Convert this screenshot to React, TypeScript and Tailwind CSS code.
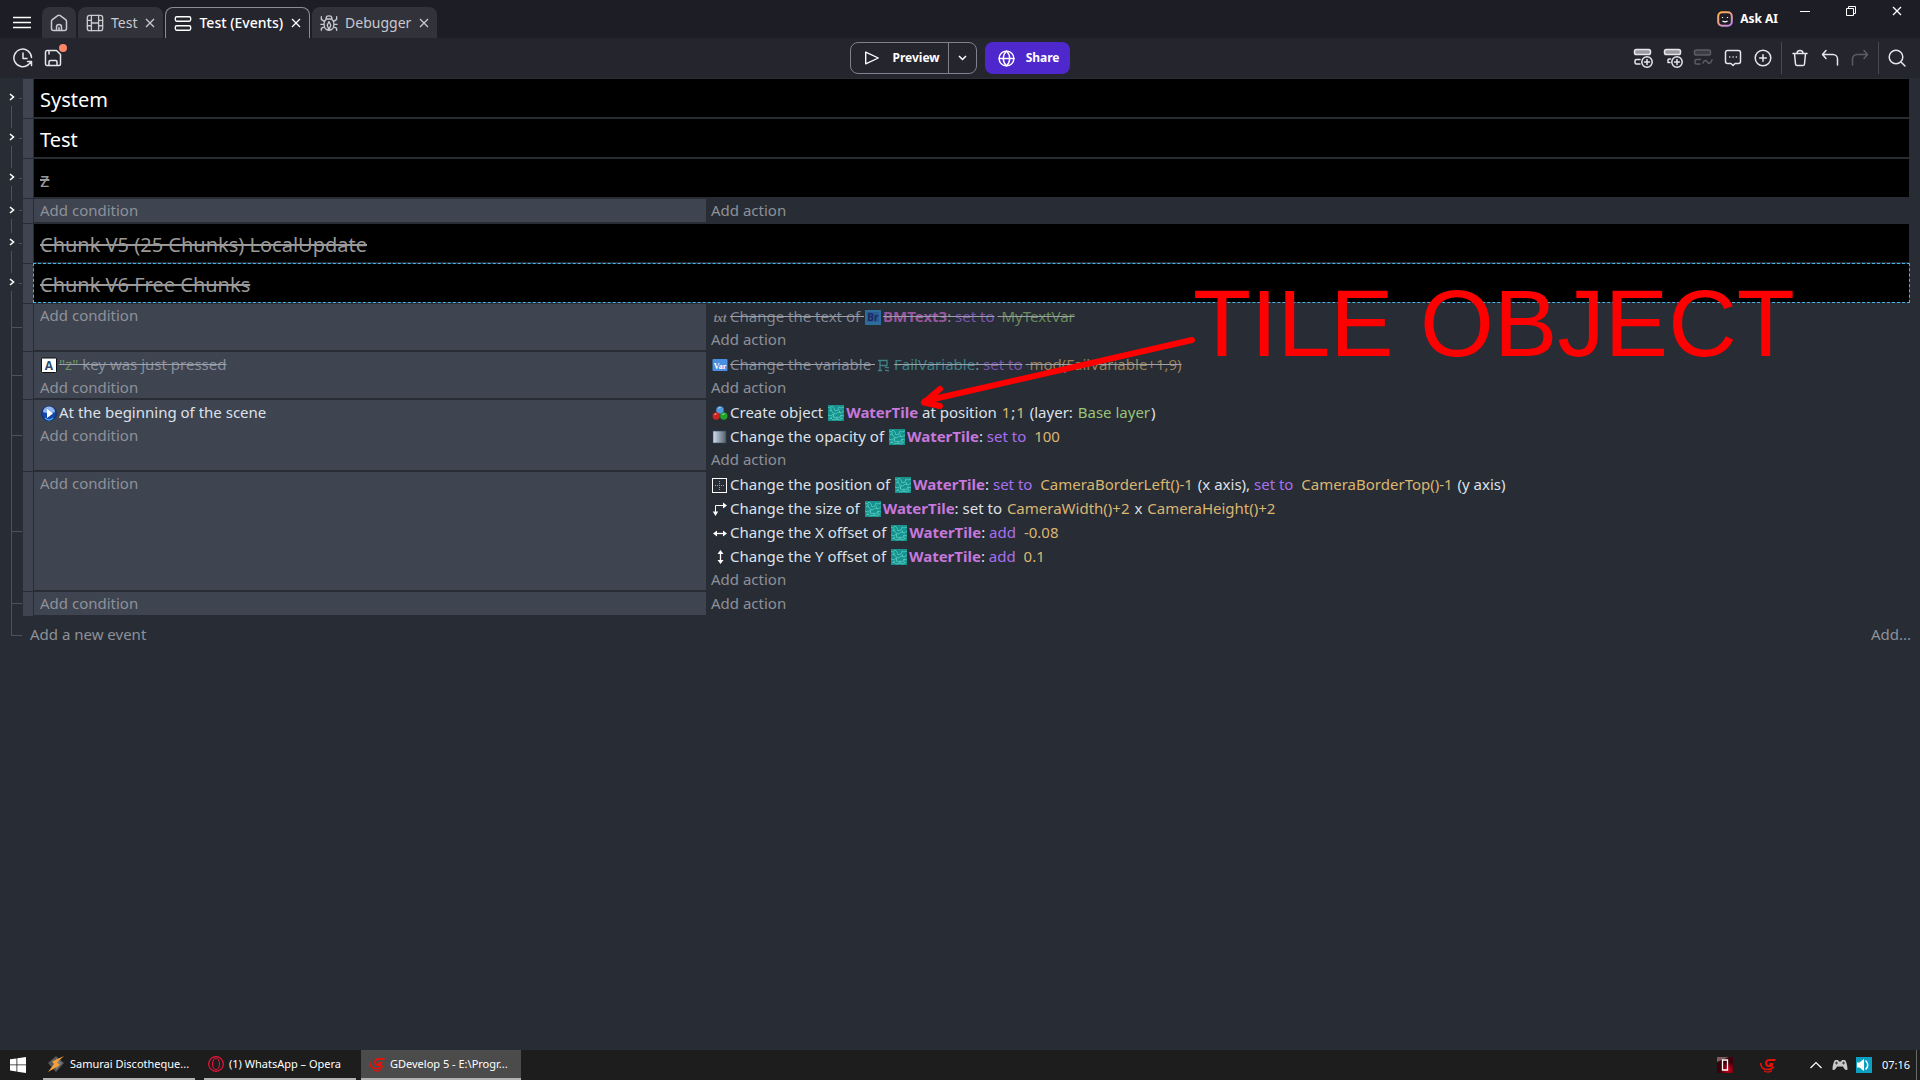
import type { ReactNode } from "react";
import clsx from "clsx";

type IconProps = { className?: string };

function LineIcon({ className, size = 20, children }: IconProps & { size?: number; children: ReactNode }) {
  return (
    <svg
      width={size}
      height={size}
      viewBox="0 0 20 20"
      fill="none"
      stroke="currentColor"
      strokeWidth="1.5"
      strokeLinecap="round"
      strokeLinejoin="round"
      aria-hidden="true"
      className={clsx("shrink-0", className)}
    >
      {children}
    </svg>
  );
}

const CloseGlyph = () => (
  <svg width="10" height="10" viewBox="0 0 10 10" stroke="currentColor" strokeWidth="1.3" aria-hidden="true">
    <path d="M1 1l8 8M9 1L1 9" />
  </svg>
);

/* ---------- title bar ---------- */

function Tab({ icon, label, active }: { icon: ReactNode; label: string; active?: boolean }) {
  return (
    <div
      className={clsx(
        "flex h-[31px] items-center rounded-t-lg pl-2 text-sm",
        active ? "border border-b-0 border-[#8c8c92] bg-[#25252e] font-medium text-white" : "bg-[#32323b] text-[#c9c9ce]",
      )}
    >
      <a href="#tab" className="flex items-center gap-[7px]">
        {icon}
        {label}
      </a>
      <button type="button" aria-label={`Close ${label}`} className="flex h-6 w-[26px] items-center justify-center">
        <CloseGlyph />
      </button>
    </div>
  );
}

function TitleBar() {
  return (
    <header className="flex h-[38px] items-end bg-[#1d1d26] text-white">
      <button type="button" aria-label="Main menu" className="flex h-[31px] w-[42px] items-center justify-center pl-[2px]">
        <svg width="18" height="14" viewBox="0 0 18 14" stroke="#fff" strokeWidth="1.6" aria-hidden="true">
          <path d="M0 1.500h18M0 6.500h18M0 11.500h18" />
        </svg>
      </button>
      <nav className="flex gap-[2px]">
        <a href="#home" aria-label="Home" className="flex h-[31px] w-[34px] items-center justify-center rounded-t-lg bg-[#32323b] text-[#c9c9ce]">
          <LineIcon>
            <path d="M2.5 8.6c0-.8.3-1.4.9-1.9l5.3-4c.8-.6 1.8-.6 2.6 0l5.3 4c.6.5.9 1.1.9 1.9v6.9c0 1.1-.9 2-2 2h-11c-1.100 0-2-.9-2-2zM7.500 17.500v-3.500a2.500 2.500 0 015 0v3.500M10 14.500v2.500" />
          </LineIcon>
        </a>
        <Tab
          label="Test"
          icon={
            <LineIcon size={18}>
              <rect x="1.500" y="1.500" width="17" height="17" rx="2.500" />
              <path d="M6 1.500v17M14 1.500v17M1.500 7h4.500M1.500 13h4.500M14 7h4.500M14 13h4.500M6 10h8" />
            </LineIcon>
          }
        />
        <Tab
          active
          label="Test (Events)"
          icon={
            <LineIcon size={18}>
              <rect x="1.500" y="3" width="17" height="5" rx="1.500" />
              <rect x="1.500" y="13" width="17" height="5" rx="1.500" />
            </LineIcon>
          }
        />
        <Tab
          label="Debugger"
          icon={
            <LineIcon size={18}>
              <path d="M7 5.500c-1.700 1.500-2.500 3.500-2.500 6 0 3.700 2.200 6.500 5.500 6.500s5.500-2.800 5.500-6.500c0-2.500-.8-4.500-2.500-6M6.500 5.500h7M7 5.500V4c0-1.200 1.200-2 3-2s3 .8 3 2v1.500M10 8.500l-2 4 2 5 2-5zM1.500 3v3l3.500 2.500M18.500 3v3L15 8.500M1 11.500h3.500M15.500 11.500H19M1.500 18v-2l3.500-2M18.500 18v-2L15 14" />
            </LineIcon>
          }
        />
      </nav>
      <div className="flex-1" />
      <button type="button" className="flex h-[38px] items-center gap-[7px] pr-1 text-xs font-bold">
        <svg width="16" height="16" viewBox="0 0 16 16" fill="none" aria-hidden="true">
          <defs>
            <linearGradient id="ask" x1="0" y1="0" x2="0.700" y2="1">
              <stop offset="0" stopColor="#ffb13d" />
              <stop offset="0.500" stopColor="#f0a08a" />
              <stop offset="1" stopColor="#c48be6" />
            </linearGradient>
          </defs>
          <rect x="1.200" y="1.200" width="13.600" height="13.600" rx="4" stroke="url(#ask)" strokeWidth="2" />
          <path d="M5.500 6v1M10.500 6v1M5.500 10c1.500 1.100 3.500 1.100 5 0" stroke="#fff" strokeWidth="1.200" />
        </svg>
        Ask AI
      </button>
      <div className="flex self-start">
        <button type="button" aria-label="Minimize" className="flex h-[22px] w-[46px] items-center justify-center">
          <svg width="10" height="10" viewBox="0 0 10 10" stroke="#fff" aria-hidden="true">
            <path d="M0 5.500h10" />
          </svg>
        </button>
        <button type="button" aria-label="Restore" className="flex h-[22px] w-[46px] items-center justify-center">
          <svg width="10" height="10" viewBox="0 0 10 10" fill="none" stroke="#fff" aria-hidden="true">
            <path d="M.5 2.500h7v7h-7zM2.500 2.500v-2h7v7h-2" />
          </svg>
        </button>
        <button type="button" aria-label="Close" className="flex h-[22px] w-[46px] items-center justify-center">
          <CloseGlyph />
        </button>
      </div>
    </header>
  );
}

/* ---------- toolbar ---------- */

function ToolButton({ label, dim, children }: { label: string; dim?: boolean; children: ReactNode }) {
  return (
    <button
      type="button"
      aria-label={label}
      disabled={dim}
      className={clsx("flex h-8 w-[30px] items-center justify-center", dim ? "text-[#5c5c64]" : "text-[#e6e6ea]")}
    >
      <LineIcon>{children}</LineIcon>
    </button>
  );
}

const ToolSeparator = () => <span className="mx-[3px] h-8 w-px bg-[#494952]" />;

function Toolbar() {
  return (
    <div className="grid h-10 grid-cols-[1fr_auto_1fr] items-center bg-[#25252e] px-2">
      <div className="flex items-center">
        <ToolButton label="Version history">
          <path d="M18.500 9.500a8.800 8.800 0 10-3.200 7.200M10 5v5.500h4M14.500 13.500h4v4M18.500 13.500L14.500 17.500" />
        </ToolButton>
        <div className="relative">
          <ToolButton label="Save">
            <path d="M2.500 4c0-.8.7-1.500 1.500-1.500h9.500l4 4V16c0 .8-.7 1.500-1.500 1.500H4c-.8 0-1.500-.7-1.500-1.500zM6 2.500V6M6 17.500v-3.800c0-.7.500-1.200 1.200-1.200h5.600c.7 0 1.200.5 1.200 1.200v3.800" />
          </ToolButton>
          <span className="absolute right-px top-[2px] h-2 w-2 rounded-full bg-[#ff8569]" />
        </div>
      </div>

      <div className="flex h-8 gap-2 text-xs font-bold text-white">
        <div className="flex rounded-lg border border-[#80808f]">
          <button type="button" className="flex items-center gap-[11px] pl-3 pr-2">
            <LineIcon size={18}>
              <path d="M3 3.500v13L17 10z" />
            </LineIcon>
            Preview
          </button>
          <button type="button" aria-label="Preview options" className="flex w-7 items-center justify-center border-l border-[#80808f]">
            <svg width="9" height="6" viewBox="0 0 9 6" fill="none" stroke="#fff" strokeWidth="1.500" aria-hidden="true">
              <path d="M1 1l3.500 3.500L8 1" />
            </svg>
          </button>
        </div>
        <button type="button" className="flex items-center gap-[10px] rounded-lg bg-[#4f28cd] pl-3 pr-[10px]">
          <LineIcon size={19}>
            <circle cx="10" cy="10" r="7.800" />
            <path d="M2.200 10h15.600M10 2.200c-4.500 4.500-4.500 11 0 15.600M10 2.200c4.500 4.500 4.500 11 0 15.600" />
          </LineIcon>
          Share
        </button>
      </div>

      <div className="flex items-center justify-end">
        <ToolButton label="Add event">
          <rect x="1.500" y="1.500" width="16" height="5" rx="1.800" fill="#9a9aa0" />
          <path d="M7 11.500H3.500A1.500 1.500 0 002 13v1.500A1.500 1.500 0 003.500 16H7" />
          <circle cx="14" cy="14" r="5.200" />
          <path d="M14 11.500v5M11.500 14h5" />
        </ToolButton>
        <ToolButton label="Add sub-event">
          <rect x="1.500" y="1.500" width="16" height="5" rx="1.800" fill="#9a9aa0" />
          <path d="M7.500 11H6a1 1 0 00-1 1v2.500h2" />
          <circle cx="14" cy="14" r="5.200" />
          <path d="M14 11.500v5M11.500 14h5" />
        </ToolButton>
        <ToolButton label="Add event from template" dim>
          <rect x="1.500" y="2" width="16" height="5" rx="1.800" fill="#3c3c45" />
          <path d="M7.500 11.500h-4A1.500 1.500 0 002 13v1.500A1.500 1.500 0 003.500 16h3.500M10 15c1.500-4 3.500-2.500 4.500-.8s3 2 4.500-2.200" />
        </ToolButton>
        <ToolButton label="Add comment">
          <path d="M4.500 2.500h11a2 2 0 012 2v9a2 2 0 01-2 2H12l-2 2-2-2H4.500a2 2 0 01-2-2v-9a2 2 0 012-2zM6.700 9h.1M10 9h.1M13.300 9h.1" />
        </ToolButton>
        <ToolButton label="Add other event">
          <circle cx="10" cy="10" r="7.800" />
          <path d="M10 6.700v6.600M6.700 10h6.600" />
        </ToolButton>
        <ToolSeparator />
        <ToolButton label="Delete">
          <path d="M3 5.500h14M7 5.500c0-2 1.200-3 3-3s3 1 3 3M4.500 5.500L5.500 16c.1.900.7 1.500 1.600 1.500h5.800c.9 0 1.500-.6 1.600-1.500l1-10.500" />
        </ToolButton>
        <ToolButton label="Undo">
          <path d="M6 2.500L2.500 6.500 6 10.500M2.500 6.500H13a4.500 4.500 0 014.500 4.500v6" />
        </ToolButton>
        <ToolButton label="Redo" dim>
          <path d="M14 2.500l3.500 4-3.500 4M17.500 6.500H7A4.500 4.500 0 002.500 11v6" />
        </ToolButton>
        <ToolSeparator />
        <ToolButton label="Search">
          <circle cx="9" cy="9" r="6.800" />
          <path d="M14 14l4 4" />
        </ToolButton>
      </div>
    </div>
  );
}

/* ---------- events sheet ---------- */

function TinyIcon({ children }: { children: ReactNode }) {
  return (
    <svg width="16" height="16" viewBox="0 0 16 16" fill="none" aria-hidden="true" className="ml-px mr-[2px] inline-block align-[-3px]">
      {children}
    </svg>
  );
}

const KeyIcon = () => (
  <TinyIcon>
    <rect x="0.500" y="1" width="15" height="14.500" rx="1" fill="#fff" stroke="#0d0f14" />
    <text x="8" y="13" textAnchor="middle" fontSize="12" fontWeight="700" fontFamily="Open Sans, sans-serif" fill="#2f4a6b">A</text>
  </TinyIcon>
);

const SceneStartIcon = () => (
  <TinyIcon>
    <circle cx="8" cy="8.500" r="7.300" fill="#1646a8" stroke="#0b2a72" />
    <path d="M2 7c0-3.500 3-5.500 6-5.500S14 3.500 14 7c-3 1.500-9 1.500-12 0z" fill="#8fb4ee" />
    <path d="M4 13c2 2.500 6 2.500 8 0" stroke="#3fa2f5" strokeWidth="1.500" />
    <path d="M6 4l6 4.500L6 13z" fill="#fff" />
  </TinyIcon>
);

const TextIcon = () => (
  <TinyIcon>
    <text x="8" y="13" textAnchor="middle" fontSize="12" fontStyle="italic" fontWeight="700" fontFamily="Liberation Serif, serif" fill="#85888f">txt</text>
  </TinyIcon>
);

const BitmapTextIcon = () => (
  <TinyIcon>
    <rect x="0" y="1" width="16" height="15" fill="#2d6d9c" />
    <rect x="2" y="3" width="12" height="10" fill="#2a5c94" />
    <text x="8" y="12" textAnchor="middle" fontSize="10" fontWeight="700" fontFamily="Open Sans, sans-serif" fill="#20275f">Br</text>
  </TinyIcon>
);

const VarIcon = () => (
  <TinyIcon>
    <rect x="0.500" y="2" width="15" height="12" rx="1" fill="#4a90e2" />
    <text x="8" y="12" textAnchor="middle" fontSize="8" fontWeight="700" fontFamily="Liberation Serif, serif" fill="#fff">Var</text>
  </TinyIcon>
);

const SceneVariableIcon = () => (
  <TinyIcon>
    <path d="M4 3v11M2 13.500h4M2 3.500h9v5H4M9 10.500c1.500-1 2.500 1 4 0M9 13.500c1.500-1 2.500 1 4 0M11 5v3" stroke="#3f8089" strokeWidth="1.300" />
  </TinyIcon>
);

const CreateIcon = () => (
  <TinyIcon>
    <circle cx="8" cy="5" r="3.800" fill="#4f9be0" />
    <circle cx="4.200" cy="11" r="3.700" fill="#c9261f" />
    <circle cx="11.800" cy="11" r="3.700" fill="#22a32b" />
    <path d="M6.500 3.500a2 2 0 012-1M2.500 10a2 2 0 012-1.200M10.500 10a2 2 0 012-1.200" stroke="#fff" opacity="0.700" />
  </TinyIcon>
);

const OpacityIcon = () => (
  <TinyIcon>
    <defs>
      <linearGradient id="fade">
        <stop offset="0" stopColor="#cfdfee" />
        <stop offset="1" stopColor="#55616e" />
      </linearGradient>
    </defs>
    <rect x="1" y="2" width="13" height="12" fill="url(#fade)" stroke="#33475a" strokeWidth="0.600" />
  </TinyIcon>
);

const PositionIcon = () => (
  <TinyIcon>
    <rect x="0.500" y="1.500" width="14" height="14" stroke="#fff" />
    <path d="M7.500 4v9M3 8.500h9" stroke="#9aa0ab" strokeDasharray="1 1" />
  </TinyIcon>
);

const SizeIcon = () => (
  <TinyIcon>
    <path d="M3.500 11V4.500H11" stroke="#fff" />
    <path d="M11 1.500l4 3-4 3zM.8 10.500h5.400L3.500 15z" fill="#fff" />
  </TinyIcon>
);

const OffsetXIcon = () => (
  <TinyIcon>
    <path d="M4 8.500h8" stroke="#fff" strokeWidth="1.300" />
    <path d="M5 5.500v6l-4-3zM11 5.500v6l4-3z" fill="#fff" />
  </TinyIcon>
);

const OffsetYIcon = () => (
  <TinyIcon>
    <path d="M8.500 4v8" stroke="#fff" strokeWidth="1.300" />
    <path d="M5.500 5h6l-3-4zM5.500 11h6l-3 4z" fill="#fff" />
  </TinyIcon>
);

const WaterTile = () => (
  <>
    <TinyIcon>
      <rect width="16" height="16" fill="#17938f" />
      <path
        d="M0 2l2 1 2-2 2 2 1 3 3-1 1-3 2 1 3-1M1 6l2-1 2 3 3 1 2-2 3 1 3-2M0 10l3 1 2-2 1 4 3-1 2 1 2-3 3 1M1 14l2-1 2 2 4-1 3 1 3-2M3 3v3M11 5l1 3M6 9l-1 3M9 12v3M13 10v4M4 12l-2 2"
        stroke="#5fd3c6"
        strokeWidth="0.700"
      />
    </TinyIcon>
    <b className="font-bold text-[#c678dd]">WaterTile</b>
  </>
);

const Op = ({ children }: { children: ReactNode }) => <span className="mr-[3px] text-[#a86ff0]">{children}</span>;
const Num = ({ children }: { children: ReactNode }) => <span className="mx-px text-[#dbb671]">{children}</span>;
const Str = ({ children }: { children: ReactNode }) => <span className="mx-px text-[#98c379]">{children}</span>;

function Instruction({ icon, disabled, children }: { icon: ReactNode; disabled?: boolean; children: ReactNode }) {
  return (
    <p className={clsx("h-6 whitespace-nowrap leading-6", disabled ? "text-[#abb2bf]/70 line-through decoration-[#9ea2aa]" : "text-[#dde1ea]")}>
      {icon}
      {children}
    </p>
  );
}

const AddLink = ({ children }: { children: ReactNode }) => (
  <button type="button" className="block h-[22px] leading-[22px] text-[#8d9199]">
    {children}
  </button>
);

function Rail({ foldable, first }: { foldable?: boolean; first?: boolean }) {
  if (!foldable) {
    return (
      <div className="flex w-[23px] items-stretch pl-[11px]">
        <span className="w-px bg-[#4e525a]" />
        <span className="mb-[2px] h-px w-[10px] self-center bg-[#4e525a]" />
      </div>
    );
  }
  return (
    <div className="flex w-[23px] items-center">
      <div className="flex w-[19px] flex-col items-center self-stretch pl-1">
        <span className={clsx("w-px flex-1", !first && "bg-[#4e525a]")} />
        <button type="button" aria-label="Expand" className="flex h-[18px] items-center">
          <svg width="6" height="8" viewBox="0 0 6 8" fill="none" stroke="#fff" strokeWidth="1.600" aria-hidden="true">
            <path d="M1 1l3.500 3L1 7" />
          </svg>
        </button>
        <span className="w-px flex-1 bg-[#4e525a]" />
        <span className="h-1 w-px bg-[#4e525a]" />
      </div>
      <span className="mb-[2px] h-px w-[3px] bg-[#4e525a]" />
    </div>
  );
}

function EventRow({ foldable, first, children }: { foldable?: boolean; first?: boolean; children: ReactNode }) {
  return (
    <li className="flex">
      <Rail foldable={foldable} first={first} />
      <span className="mb-px mr-px w-[10px] bg-[#3f4451]" />
      <div className="mb-[2px] flex min-w-0 flex-1">{children}</div>
    </li>
  );
}

function Group({ title, disabled, selected, first }: { title: string; disabled?: boolean; selected?: boolean; first?: boolean }) {
  return (
    <EventRow foldable first={first}>
      <h2
        className={clsx(
          "relative h-[38px] flex-1 bg-black pl-[6px] text-xl leading-[42px]",
          disabled ? "text-[#999] line-through" : "text-white",
        )}
      >
        {title}
        {selected && <span className="absolute -inset-px border border-dashed border-[#49b3e6]" />}
      </h2>
    </EventRow>
  );
}

function StandardEvent({ foldable, conditions, actions }: { foldable?: boolean; conditions?: ReactNode; actions?: ReactNode }) {
  return (
    <EventRow foldable={foldable}>
      <div className="min-h-[23px] w-[672px] shrink-0 bg-[#3f4451] pl-[6px]">
        {conditions}
        <AddLink>Add condition</AddLink>
      </div>
      <div className="min-w-0 flex-1 pl-[5px]">
        {actions}
        <AddLink>Add action</AddLink>
      </div>
    </EventRow>
  );
}

function EventsSheet() {
  return (
    <main className="flex-1 bg-[#282c34] pr-[11px] pt-px font-['Noto_Sans',sans-serif] text-[15px]">
      <ul>
        <Group first title="System" />
        <Group title="Test" />
        <Group disabled title="z" />
        <StandardEvent foldable />
        <Group disabled title="Chunk V5 (25 Chunks) LocalUpdate" />
        <Group disabled selected title="Chunk V6 Free Chunks" />
        <StandardEvent
          actions={
            <Instruction disabled icon={<TextIcon />}>
              Change the text of <BitmapTextIcon />
              <b className="text-[#96579f]">BMText3</b>: <span className="mr-[3px] text-[#7b53ab]">set to</span>{" "}
              <span className="text-[#6a8a5b]">MyTextVar</span>
            </Instruction>
          }
        />
        <StandardEvent
          conditions={
            <Instruction disabled icon={<KeyIcon />}>
              <span className="text-[#6f9160]">"z"</span> key was just pressed
            </Instruction>
          }
          actions={
            <Instruction disabled icon={<VarIcon />}>
              Change the variable <SceneVariableIcon />
              <span className="text-[#3f8089]">FailVariable</span>: <span className="mr-[3px] text-[#7b53ab]">set to</span>{" "}
              <span className="text-[#9a8258]">mod(FailVariable+1,9)</span>
            </Instruction>
          }
        />
        <StandardEvent
          conditions={<Instruction icon={<SceneStartIcon />}>At the beginning of the scene</Instruction>}
          actions={
            <>
              <Instruction icon={<CreateIcon />}>
                Create object <WaterTile /> at position <Num>1</Num>;<Num>1</Num> (layer: <Str>Base layer</Str>)
              </Instruction>
              <Instruction icon={<OpacityIcon />}>
                Change the opacity of <WaterTile />: <Op>set to</Op> <Num>100</Num>
              </Instruction>
            </>
          }
        />
        <StandardEvent
          actions={
            <>
              <Instruction icon={<PositionIcon />}>
                Change the position of <WaterTile />: <Op>set to</Op> <Num>CameraBorderLeft()-1</Num> (x axis), <Op>set to</Op>{" "}
                <Num>CameraBorderTop()-1</Num> (y axis)
              </Instruction>
              <Instruction icon={<SizeIcon />}>
                Change the size of <WaterTile />: set to <Num>CameraWidth()+2</Num> x <Num>CameraHeight()+2</Num>
              </Instruction>
              <Instruction icon={<OffsetXIcon />}>
                Change the X offset of <WaterTile />: <Op>add</Op> <Num>-0.08</Num>
              </Instruction>
              <Instruction icon={<OffsetYIcon />}>
                Change the Y offset of <WaterTile />: <Op>add</Op> <Num>0.1</Num>
              </Instruction>
            </>
          }
        />
        <StandardEvent />
      </ul>
      <div className="flex text-[#8d9199]">
        <span className="ml-[11px] h-[19px] w-[11px] border-b border-l border-[#4e525a]" />
        <div className="flex flex-1 justify-between pl-2 pt-[6px]">
          <button type="button">Add a new event</button>
          <button type="button" className="-mr-[2px]">Add...</button>
        </div>
      </div>
    </main>
  );
}

/* Red call-out drawn on top of the sheet. */
function Annotation() {
  return (
    <svg
      width="900"
      height="170"
      viewBox="0 0 900 170"
      className="pointer-events-none absolute left-[915px] top-[255px]"
      role="img"
      aria-label="TILE OBJECT"
    >
      <path d="M277 85L10 146M25 134L9 147.500l16 3.500" fill="none" stroke="#f00" strokeWidth="6" strokeLinecap="round" strokeLinejoin="round" />
      <text x="278" y="101" fontSize="95" fontFamily="Liberation Sans, Arial, sans-serif" fill="#f00">TILE OBJECT</text>
    </svg>
  );
}

/* ---------- desktop task bar ---------- */

function TaskButton({ icon, label, active }: { icon: ReactNode; label: string; active?: boolean }) {
  return (
    <button
      type="button"
      className={clsx(
        "flex h-[30px] items-center gap-[5px] whitespace-nowrap border-b-2 border-[#b3b3b3] text-left",
        active ? "w-[160px] bg-[#4b4b4b] pl-2" : "w-[152px] pl-1",
      )}
    >
      {icon}
      <span>{label}</span>
    </button>
  );
}

const GDevelopLogo = () => (
  <svg width="16" height="16" viewBox="0 0 16 16" fill="none" stroke="#e3120b" aria-hidden="true" className="shrink-0">
    <path d="M15.500 3H9.500C7.300 3 6 4.200 6 6s1.300 3 3 3h2.800L12.300 7H9.500" strokeWidth="1.900" />
    <path d="M.5 6c.5 4.500 3.500 6.500 7 6.500 3 0 5-.8 6.500-2.800" strokeWidth="1.600" />
    <path d="M4 14c2.500 1.200 6 1.200 8-.5" strokeWidth="1.200" />
  </svg>
);

function TaskBar() {
  return (
    <footer className="flex h-[30px] items-center bg-[#1d1d1d] font-['Noto_Sans',sans-serif] text-[11px] text-white">
      <button type="button" aria-label="Start" className="flex h-[30px] w-[43px] items-center pl-[10px]">
        <svg width="16" height="16" viewBox="0 0 16 16" fill="#fff" aria-hidden="true">
          <path d="M0 2.300l6.500-.9v6.100H0zM7.300 1.300L16 0v7.500H7.300zM0 8.300h6.500v6.200L0 13.600zM7.300 8.300H16V16l-8.700-1.300z" />
        </svg>
      </button>
      <TaskButton
        label="Samurai Discotheque..."
        icon={
          <svg width="18" height="16" viewBox="0 0 18 16" aria-hidden="true" className="shrink-0">
            <path d="M9 0l8 7-8 9-8-9z" fill="#55595c" />
            <path d="M9 2l6 5-6 7z" fill="#777b7e" />
            <path d="M17 0L5 5.500 7 8 1 16l12-7-3-2.500z" fill="#f5a13a" />
          </svg>
        }
      />
      <span className="w-[9px]" />
      <TaskButton
        label="(1) WhatsApp – Opera"
        icon={
          <svg width="16" height="16" viewBox="0 0 16 16" fill="none" stroke="#f0143c" aria-hidden="true" className="shrink-0">
            <circle cx="8" cy="8" r="7.300" strokeWidth="1.200" />
            <ellipse cx="8" cy="8" rx="3.500" ry="5.800" />
          </svg>
        }
      />
      <span className="w-[5px]" />
      <TaskButton active label="GDevelop 5 - E:\Progr..." icon={<GDevelopLogo />} />
      <div className="flex-1" />
      <div className="flex items-center">
        <svg width="16" height="16" viewBox="0 0 16 16" fill="none" aria-hidden="true">
          <defs>
            <radialGradient id="meter" cx="0.700" cy="0.800">
              <stop offset="0" stopColor="#d8001c" />
              <stop offset="1" stopColor="#3a0208" />
            </radialGradient>
          </defs>
          <rect width="16" height="16" fill="url(#meter)" />
          <path d="M0 0h12L0 5z" fill="#8f7376" opacity="0.800" />
          <path d="M5.500 3h5v10h-5zM5.500 7.500V3" stroke="#fff" strokeWidth="1.300" />
        </svg>
        <span className="ml-[27px]">
          <GDevelopLogo />
        </span>
        <button type="button" aria-label="Show hidden icons" className="ml-[34px]">
          <svg width="12" height="8" viewBox="0 0 12 8" fill="none" stroke="#fff" strokeWidth="1.200" aria-hidden="true">
            <path d="M.5 7L6 1.500 11.500 7" />
          </svg>
        </button>
        <svg width="16" height="16" viewBox="0 0 16 16" aria-hidden="true" className="ml-[10px]">
          <path d="M3 3h3l1 1.500h2L10 3h3c1.500 2 2.500 6 2.500 9.500-1.500 1.500-3 0-4.500-3H5c-1.500 3-3 4.500-4.500 3C.5 9 1.500 5 3 3z" fill="#c9c9c9" />
          <path d="M4.500 4.500v3M3 6h3M11.500 4.500v3M10 6h3" stroke="#444" />
        </svg>
        <svg width="16" height="16" viewBox="0 0 16 16" fill="none" aria-hidden="true" className="ml-2">
          <rect width="16" height="16" fill="#0d9fc0" />
          <path d="M1 5.500h2.500L8 2v12l-4.500-3.500H1z" fill="#fff" />
          <path d="M9.500 3.500c3 2.500 3 6.500 0 9" stroke="#fff" strokeWidth="1.500" />
        </svg>
        <time className="ml-[10px]">07:16</time>
        <span className="ml-[6px] mr-[3px] h-[30px] w-px bg-[#6a6a6a]" />
      </div>
    </footer>
  );
}

export default function App() {
  return (
    <div className="relative flex min-h-screen flex-col overflow-hidden bg-[#282c34] font-['Noto_Sans',sans-serif]">
      <TitleBar />
      <Toolbar />
      <EventsSheet />
      <Annotation />
      <TaskBar />
    </div>
  );
}
